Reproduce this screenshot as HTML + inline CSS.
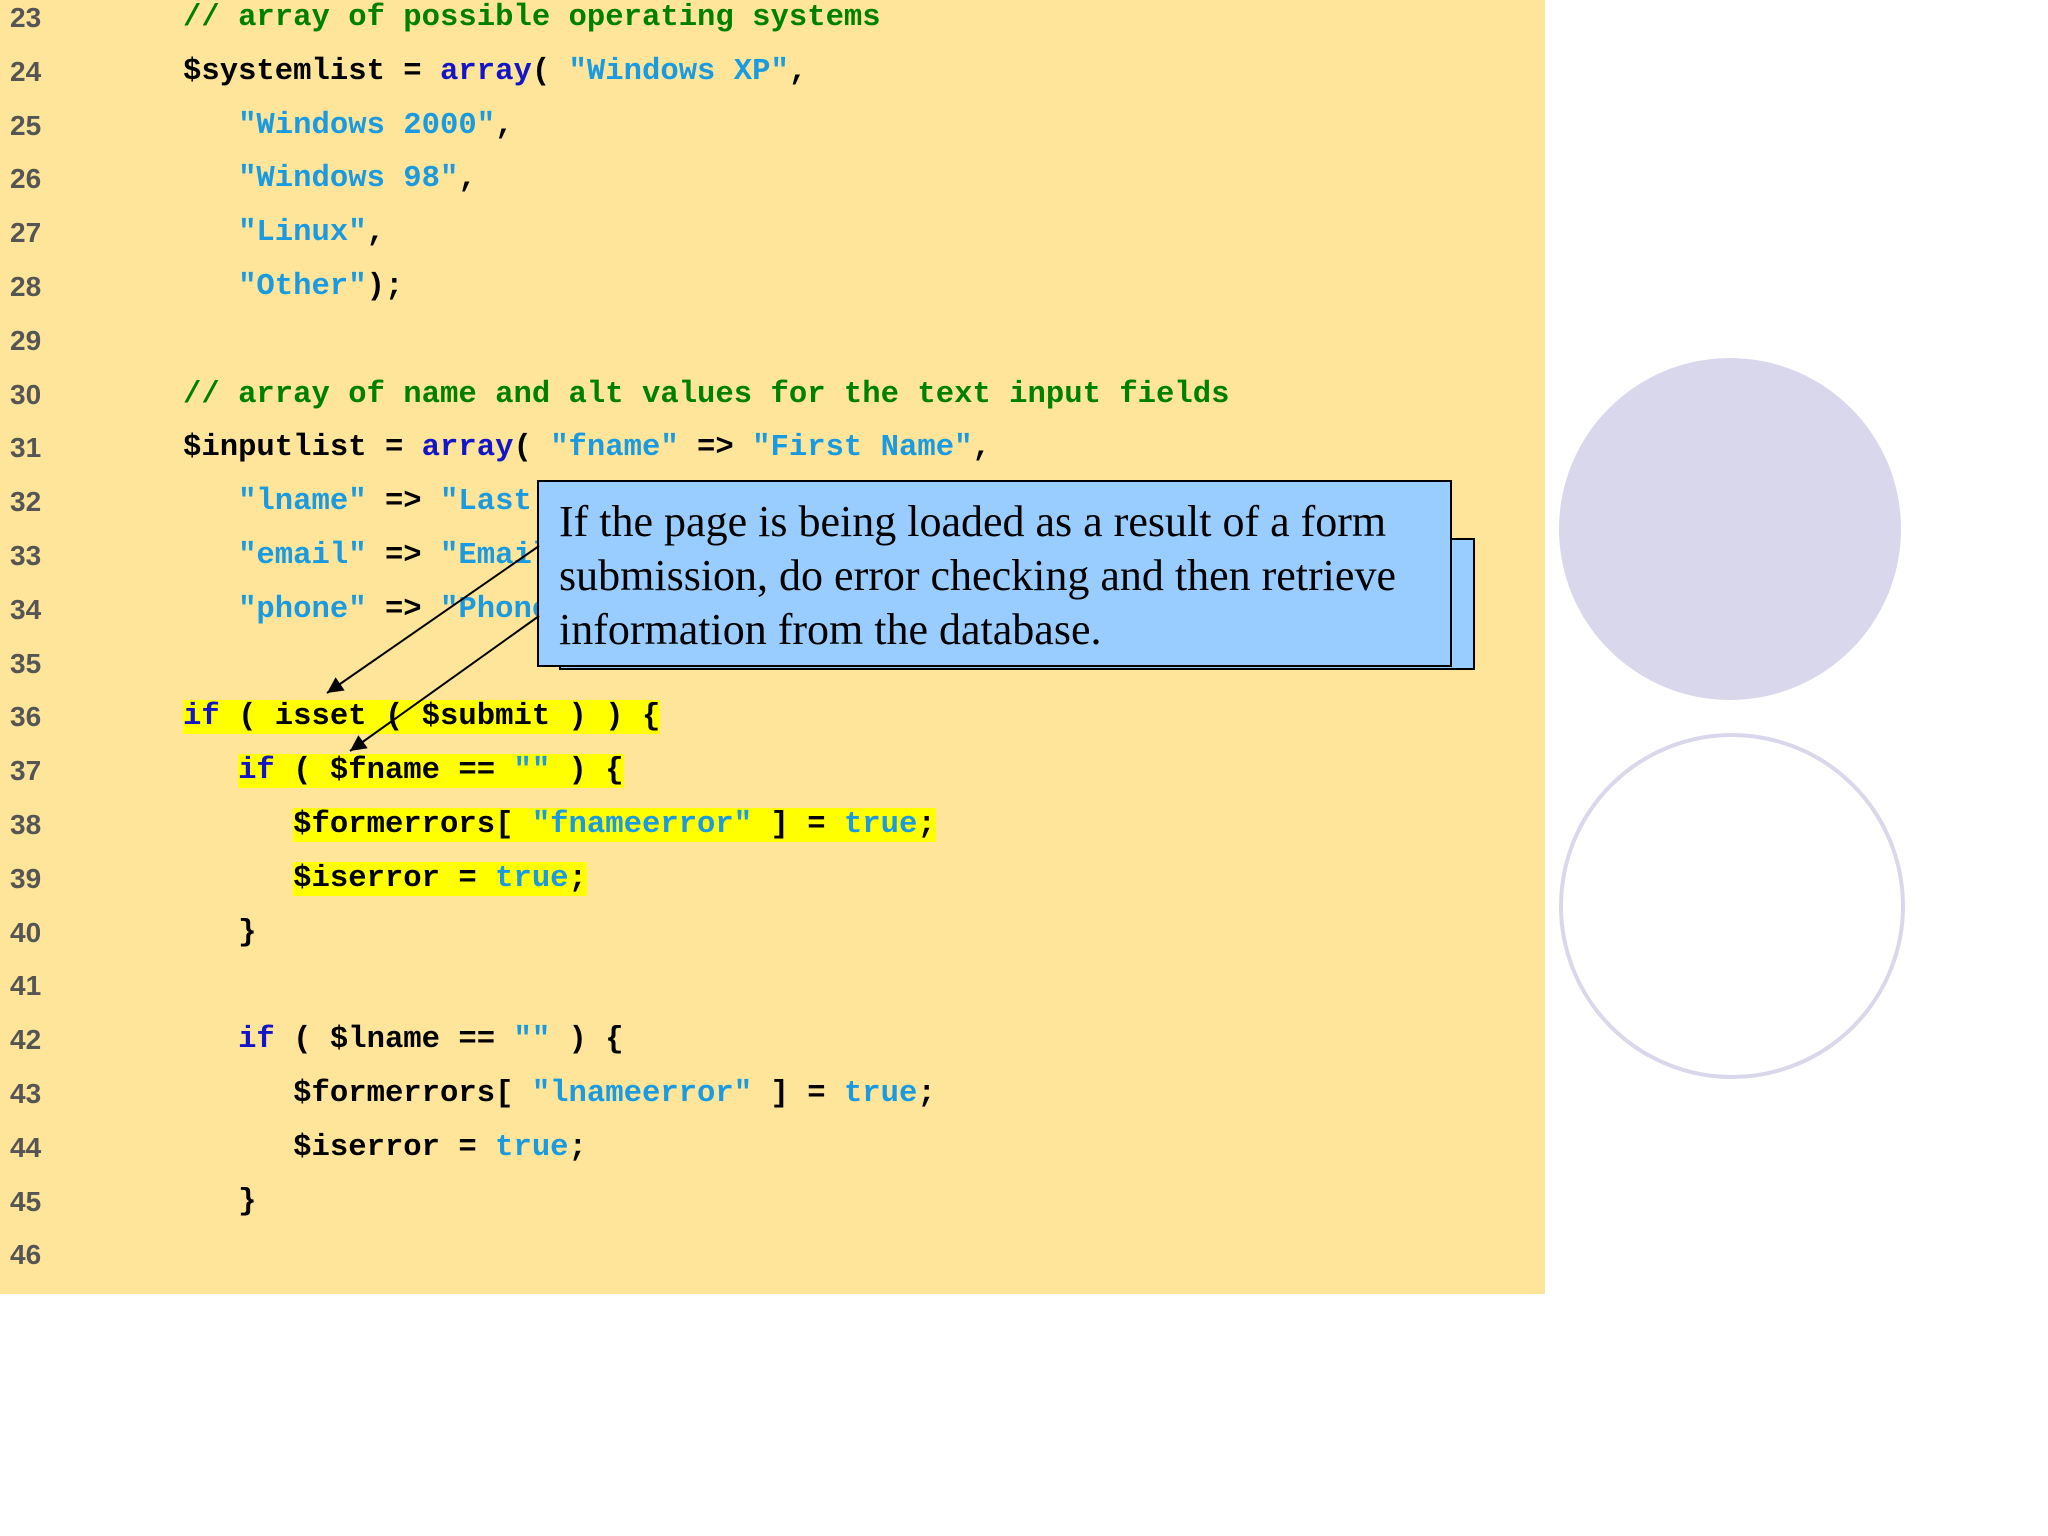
<!DOCTYPE html>
<html><head><meta charset="utf-8"><style>
html,body{margin:0;padding:0;width:2048px;height:1536px;background:#fff;overflow:hidden;position:relative}
#bg{position:absolute;left:0;top:0;width:1545px;height:1294px;background:#ffe599}
#nums{position:absolute;left:10px;top:-9px;font:bold 28px/53.8px "Liberation Sans",sans-serif;color:#555}
#code{position:absolute;left:183px;top:-8px;font:bold 30.6px/53.8px "Liberation Mono",monospace;color:#000;white-space:pre}
.c{color:#008000}.k{color:#1414c8}.s{color:#1a9ae0}
.h{background:#ffff00}
#back{position:absolute;left:559px;top:538px;width:912px;height:128px;background:#99ccff;border:2px solid #000}
#box{position:absolute;left:537px;top:480px;width:911px;height:183px;background:#99ccff;border:2px solid #000}
#txt{position:absolute;left:559px;top:495px;font:44px/54px "Liberation Serif",serif;color:#000;white-space:pre}
.circ{position:absolute;border-radius:50%}
</style></head><body>
<div id="bg"></div>
<div id="nums">23<br>24<br>25<br>26<br>27<br>28<br>29<br>30<br>31<br>32<br>33<br>34<br>35<br>36<br>37<br>38<br>39<br>40<br>41<br>42<br>43<br>44<br>45<br>46</div>
<div id="code"><span class="c">// array of possible operating systems</span>
$systemlist = <span class="k">array</span>( <span class="s">"Windows XP"</span>,
   <span class="s">"Windows 2000"</span>,
   <span class="s">"Windows 98"</span>,
   <span class="s">"Linux"</span>,
   <span class="s">"Other"</span>);

<span class="c">// array of name and alt values for the text input fields</span>
$inputlist = <span class="k">array</span>( <span class="s">"fname"</span> =&gt; <span class="s">"First Name"</span>,
   <span class="s">"lname"</span> =&gt; <span class="s">"Last Name"</span>,
   <span class="s">"email"</span> =&gt; <span class="s">"Email"</span>,
   <span class="s">"phone"</span> =&gt; <span class="s">"Phone"</span> );

<span class="h"><span class="k">if</span> ( isset ( $submit ) ) {</span>
   <span class="h"><span class="k">if</span> ( $fname == <span class="s">""</span> ) {</span>
      <span class="h">$formerrors[ <span class="s">"fnameerror"</span> ] = <span class="s">true</span>;</span>
      <span class="h">$iserror = <span class="s">true</span>;</span>
   }

   <span class="k">if</span> ( $lname == <span class="s">""</span> ) {
      $formerrors[ <span class="s">"lnameerror"</span> ] = <span class="s">true</span>;
      $iserror = <span class="s">true</span>;
   }
</div>
<div id="back"></div>
<div id="box"></div>
<div id="txt">If the page is being loaded as a result of a form
submission, do error checking and then retrieve
information from the database.</div>
<svg style="position:absolute;left:0;top:0" width="2048" height="1536">
<defs><marker id="a" markerWidth="10" markerHeight="10" refX="9" refY="5" orient="auto" markerUnits="userSpaceOnUse"><path d="M0,0 L20,5 L0,10 z" transform="scale(0.5,1) translate(0,0)"/></marker>
<marker id="b" viewBox="0 0 10 10" markerWidth="20" markerHeight="16" refX="10" refY="5" orient="auto" markerUnits="userSpaceOnUse"><path d="M0,0 L10,5 L0,10 z" fill="#000"/></marker></defs>
<line x1="539" y1="546" x2="327" y2="693" stroke="#000" stroke-width="2" marker-end="url(#b)"/>
<line x1="539" y1="616" x2="350" y2="751" stroke="#000" stroke-width="2" marker-end="url(#b)"/>
</svg>
<div class="circ" style="left:1559px;top:358px;width:342px;height:342px;background:#d9d7eb"></div>
<div class="circ" style="left:1559px;top:733px;width:338px;height:338px;border:4px solid #d9d7eb"></div>
</body></html>
